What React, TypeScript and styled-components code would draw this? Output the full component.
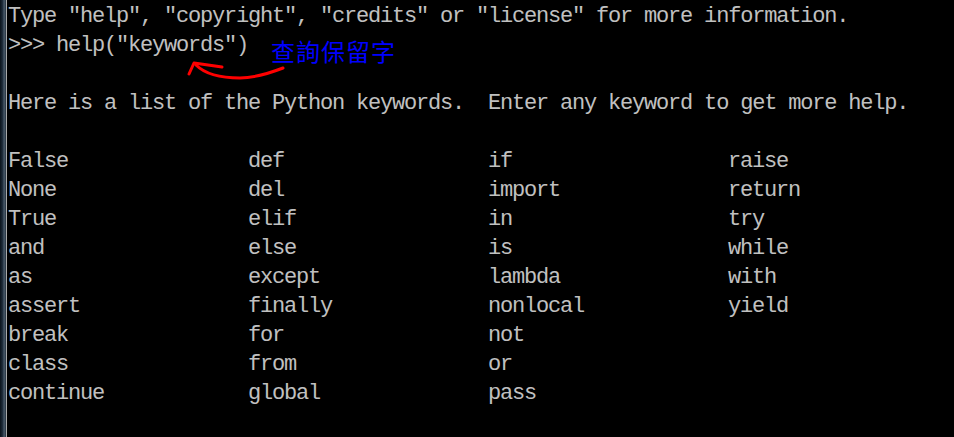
import React from "react";
import styled, { createGlobalStyle } from "styled-components";

const GlobalStyle = createGlobalStyle`
  html, body {
    margin: 0;
    padding: 0;
    background: #000;
  }
`;

const Frame = styled.div`
  display: flex;
  width: 954px;
  height: 437px;
  overflow: hidden;
  background: #000;
`;

const Edge = styled.div`
  width: 6px;
  flex: none;
  background: linear-gradient(
    to right,
    #0a121a 0%,
    #1c2a38 40%,
    #4a5a6a 70%,
    #22303c 100%
  );
  border-right: 1px solid #a9a9a9;
`;

const Console = styled.div`
  position: relative;
  flex: 1;
  padding: 2px 0 0 1px;
  color: #c0c0c0;
  font-family: "Liberation Mono", monospace;
  font-size: 22px;
  letter-spacing: -1.2px;
`;

const Line = styled.div`
  height: 29px;
  line-height: 29px;
  white-space: pre;
`;

const KeywordGrid = styled.div`
  display: grid;
  grid-template-columns: repeat(4, 240px);
  grid-template-rows: repeat(9, 29px);
  grid-auto-flow: column;
  line-height: 29px;
`;

const Keyword = styled.div`
  white-space: pre;
`;

const Note = styled.div`
  position: absolute;
  left: 264px;
  top: 36px;
  color: #0000ff;
  font-family: "Noto Sans CJK TC", sans-serif;
  font-size: 24px;
  line-height: 30px;
  letter-spacing: 1px;
`;

const Arrow = styled.svg`
  position: absolute;
  left: -7px;
  top: 0;
  width: 954px;
  height: 100px;
  pointer-events: none;
`;

const columns = [
  ["False", "None", "True", "and", "as", "assert", "break", "class", "continue"],
  ["def", "del", "elif", "else", "except", "finally", "for", "from", "global"],
  ["if", "import", "in", "is", "lambda", "nonlocal", "not", "or", "pass"],
  ["raise", "return", "try", "while", "with", "yield"],
];

export default function App() {
  return (
    <>
      <GlobalStyle />
      <Frame>
        <Edge />
        <Console>
          <Line>Type "help", "copyright", "credits" or "license" for more information.</Line>
          <Line>{'>>> help("keywords")'}</Line>
          <Line />
          <Line>Here is a list of the Python keywords.  Enter any keyword to get more help.</Line>
          <Line />
          <KeywordGrid>
            {columns.map((col, ci) =>
              col.map((kw) => <Keyword key={`${ci}-${kw}`} style={{ gridColumn: ci + 1 }}>{kw}</Keyword>)
            )}
          </KeywordGrid>
          <Note>查詢保留字</Note>
          <Arrow viewBox="0 0 954 100">
            <path
              d="M 283 68 C 270 73, 256 78, 240 78 C 220 78, 205 74, 196 65"
              stroke="#ff0000"
              strokeWidth="3"
              fill="none"
              strokeLinecap="round"
            />
            <path
              d="M 189 74 L 194 63 L 222 67"
              stroke="#ff0000"
              strokeWidth="3"
              fill="none"
              strokeLinecap="round"
              strokeLinejoin="round"
            />
          </Arrow>
        </Console>
      </Frame>
    </>
  );
}
